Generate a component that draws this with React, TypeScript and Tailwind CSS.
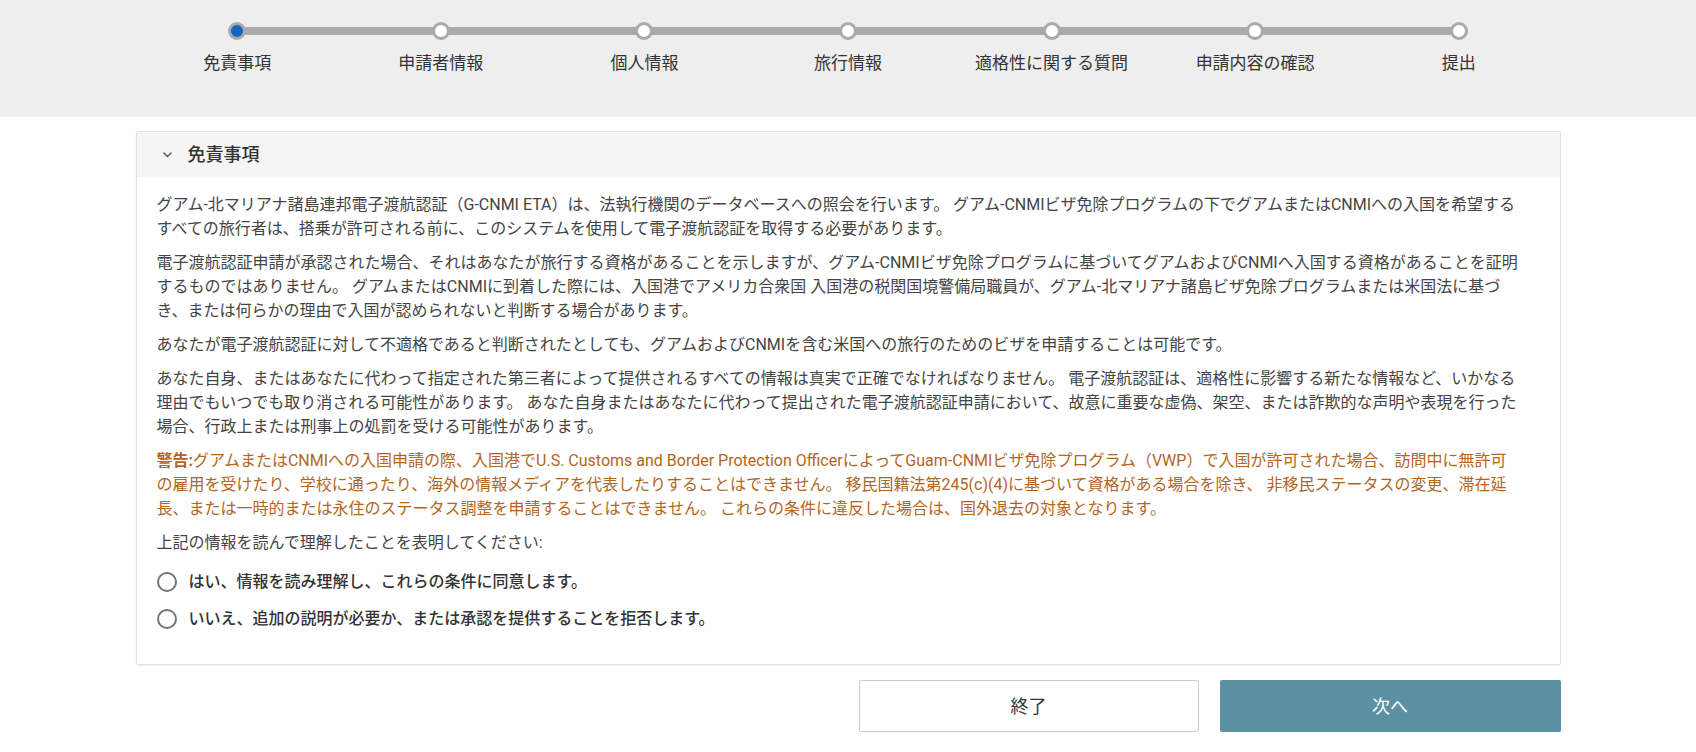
import React from "react";

const steps = [
  "免責事項",
  "申請者情報",
  "個人情報",
  "旅行情報",
  "適格性に関する質問",
  "申請内容の確認",
  "提出",
];

function Stepper() {
  return (
    <div className="bg-[#eeeeee] h-[117px]">
      <div className="mx-auto w-[1425px] grid grid-cols-7 pt-[22px]">
        {steps.map((s, i) => (
          <div key={s} className="flex flex-col items-center">
            <div className="flex items-center w-full">
              <div className={i > 0 ? "h-[8px] flex-1 bg-[#aaaaaa]" : "h-[8px] flex-1"} />
              <div
                className={
                  i === 0
                    ? "w-[18px] h-[18px] rounded-full border-[3px] border-[#aaaaaa] bg-[#1565c0] -mx-px"
                    : "w-[18px] h-[18px] rounded-full border-[3px] border-[#aaaaaa] bg-white -mx-px"
                }
              />
              <div className={i < 6 ? "h-[8px] flex-1 bg-[#aaaaaa]" : "h-[8px] flex-1"} />
            </div>
            <div className="mt-[11px] text-[17px] leading-6 text-[#333333]">{s}</div>
          </div>
        ))}
      </div>
    </div>
  );
}

function Radio({ label }: { label: string }) {
  return (
    <label className="flex items-center gap-[12px] h-6">
      <span className="w-[20px] h-[20px] rounded-full border-2 border-[#757575] bg-white shrink-0" />
      <span className="text-[16px] leading-6 font-medium text-[#333333]">{label}</span>
    </label>
  );
}

export default function App() {
  return (
    <div
      className="min-h-[752px] bg-white"
      style={{ fontFamily: 'Roboto, "Noto Sans CJK JP", sans-serif' }}
    >
      <Stepper />
      <div className="mx-auto w-[1425px]">
        <div className="mt-[14px] border border-[#e2e2e2] rounded-[2px] shadow-[0_1px_2px_rgba(0,0,0,0.06)]">
          <div className="h-[45px] bg-[#f5f5f5] flex items-center pl-[26px] gap-[16px]">
            <svg width="9" height="6" viewBox="0 0 9 6" fill="none">
              <path d="M1 1l3.5 3.5L8 1" stroke="#555555" strokeWidth="1.4" strokeLinecap="round" strokeLinejoin="round" />
            </svg>
            <span className="text-[18px] font-medium text-[#333333]">免責事項</span>
          </div>
          <div className="pl-[20px] pr-[16px] pt-[16px] pb-[33px] text-[16px] leading-6 text-[#444444]">
            <p className="mb-[10px]">
              グアム-北マリアナ諸島連邦電子渡航認証（G-CNMI ETA）は、法執行機関のデータベースへの照会を行います。 グアム-CNMIビザ免除プログラムの下でグアムまたはCNMIへの入国を希望する
              <br />
              すべての旅行者は、搭乗が許可される前に、このシステムを使用して電子渡航認証を取得する必要があります。
            </p>
            <p className="mb-[10px]">
              電子渡航認証申請が承認された場合、それはあなたが旅行する資格があることを示しますが、グアム-CNMIビザ免除プログラムに基づいてグアムおよびCNMIへ入国する資格があることを証明
              <br />
              するものではありません。 グアムまたはCNMIに到着した際には、入国港でアメリカ合衆国 入国港の税関国境警備局職員が、グアム-北マリアナ諸島ビザ免除プログラムまたは米国法に基づ
              <br />
              き、または何らかの理由で入国が認められないと判断する場合があります。
            </p>
            <p className="mb-[10px]">
              あなたが電子渡航認証に対して不適格であると判断されたとしても、グアムおよびCNMIを含む米国への旅行のためのビザを申請することは可能です。
            </p>
            <p className="mb-[10px]">
              あなた自身、またはあなたに代わって指定された第三者によって提供されるすべての情報は真実で正確でなければなりません。 電子渡航認証は、適格性に影響する新たな情報など、いかなる
              <br />
              理由でもいつでも取り消される可能性があります。 あなた自身またはあなたに代わって提出された電子渡航認証申請において、故意に重要な虚偽、架空、または詐欺的な声明や表現を行った
              <br />
              場合、行政上または刑事上の処罰を受ける可能性があります。
            </p>
            <p className="mb-[10px] text-[#b4651e]">
              <span className="font-bold">警告:</span>グアムまたはCNMIへの入国申請の際、入国港でU.S. Customs and Border Protection OfficerによってGuam-CNMIビザ免除プログラム（VWP）で入国が許可された場合、訪問中に無許可
              <br />
              の雇用を受けたり、学校に通ったり、海外の情報メディアを代表したりすることはできません。 移民国籍法第245(c)(4)に基づいて資格がある場合を除き、 非移民ステータスの変更、滞在延
              <br />
              長、または一時的または永住のステータス調整を申請することはできません。 これらの条件に違反した場合は、国外退去の対象となります。
            </p>
            <p>上記の情報を読んで理解したことを表明してください:</p>
            <div className="mt-[15px] flex flex-col gap-[13px]">
              <Radio label="はい、情報を読み理解し、これらの条件に同意します。" />
              <Radio label="いいえ、追加の説明が必要か、または承認を提供することを拒否します。" />
            </div>
          </div>
        </div>
        <div className="mt-[15px] flex justify-end gap-[21px]">
          <button className="w-[340px] h-[52px] bg-white border border-[#cccccc] rounded-[2px] text-[18px] text-[#333333]">
            終了
          </button>
          <button className="w-[341px] h-[52px] bg-[#5b91a3] rounded-[2px] text-[18px] text-white">
            次へ
          </button>
        </div>
      </div>
    </div>
  );
}
